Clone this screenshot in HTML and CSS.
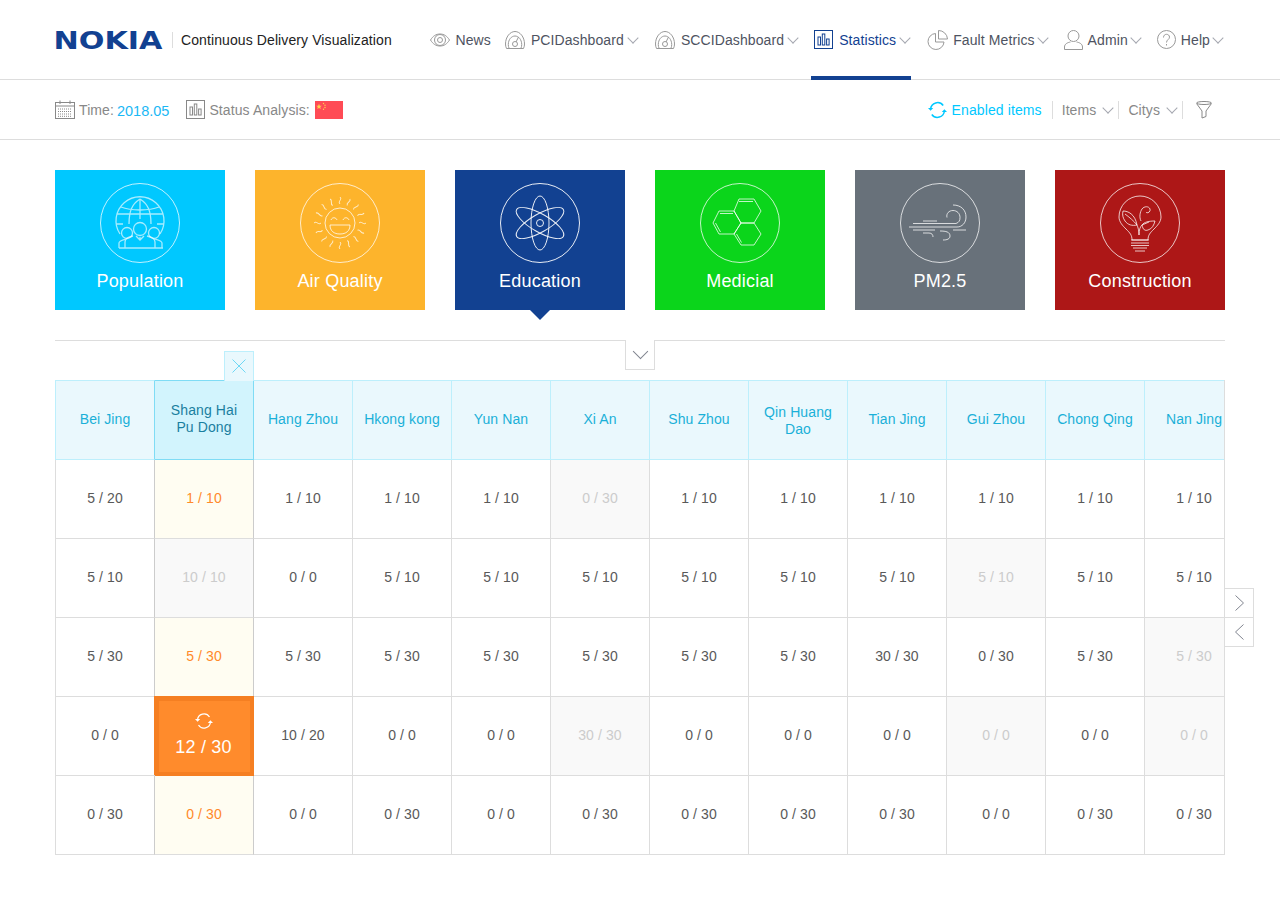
FILE: index.html
```html
<!DOCTYPE html>
<html lang="en">
<head>
  <meta charset="UTF-8">
  <title>Continuous Delivery Visualization</title>
  <link rel="stylesheet" href="styles.css">
</head>
<body>
  <header class="topbar">
    <div class="brand">
      <svg class="logo" width="107" height="30" viewBox="0 0 107 30"><text x="-1.500" y="23.500" textLength="109" lengthAdjust="spacingAndGlyphs">NOKIA</text></svg>
      <span class="brand-name">Continuous Delivery Visualization</span>
    </div>
    <nav class="nav">
      <a class="nav-item">
        <svg class="ico" width="20" height="14" viewBox="0 0 20 14"><path d="M.5 7C3 3 6 1 10 1s7 2 9.500 6C17 11 14 13 10 13S3 11 .5 7z"/><circle cx="10" cy="7" r="5.500"/><circle cx="10" cy="7" r="2.500"/></svg>
        News
      </a>
      <a class="nav-item wide-gap spaced">
        <svg class="ico" width="20" height="18" viewBox="0 0 20 18"><path d="M1.500 17.500C.8 16 .5 14.500.5 13 .5 6 5 .5 10 .5S19.500 6 19.500 13c0 1.500-.3 3-1 4.500z"/><path d="M4 17c-.5-1-.7-2-.7-3.500C3.300 8.500 6.500 5 10 5s6.700 3.500 6.700 8.500c0 1.500-.2 2.500-.7 3.500"/><circle cx="10" cy="13" r="2.500"/><path d="M11 11l2.500-5"/></svg>
        PCIDashboard<i class="chev"></i>
      </a>
      <a class="nav-item wide-gap">
        <svg class="ico" width="20" height="18" viewBox="0 0 20 18"><path d="M1.500 17.500C.8 16 .5 14.500.5 13 .5 6 5 .5 10 .5S19.500 6 19.500 13c0 1.500-.3 3-1 4.500z"/><path d="M4 17c-.5-1-.7-2-.7-3.500C3.300 8.500 6.500 5 10 5s6.700 3.500 6.700 8.500c0 1.500-.2 2.500-.7 3.500"/><circle cx="10" cy="13" r="2.500"/><path d="M11 11l2.500-5"/></svg>
        SCCIDashboard<i class="chev"></i>
      </a>
      <a class="nav-item wide-gap spaced active">
        <svg class="ico" width="19" height="19" viewBox="0 0 19 19"><rect x=".5" y=".5" width="18" height="18"/><rect x="4" y="7" width="2.500" height="8"/><rect x="8.300" y="4" width="2.500" height="11"/><rect x="12.600" y="9" width="2.500" height="6"/></svg>
        Statistics<i class="chev"></i>
      </a>
      <a class="nav-item">
        <svg class="ico" width="21" height="20" viewBox="0 0 21 20"><path d="M8.500 3.500a8 8 0 1 0 8.500 8.500H8.500z"/><path d="M11.500.5v8.500H20.500A9 9 0 0 0 11.500.5z"/></svg>
        Fault Metrics<i class="chev"></i>
      </a>
      <a class="nav-item">
        <svg class="ico" width="19" height="20" viewBox="0 0 19 20"><circle cx="9.500" cy="6" r="5.500"/><path d="M.5 19.500v-2.500c0-3 3-4.500 6-5M18.500 19.500v-2.500c0-3-3-4.500-6-5M.5 19.500h18"/></svg>
        Admin<i class="chev"></i>
      </a>
      <a class="nav-item">
        <svg class="ico" width="19" height="19" viewBox="0 0 19 19"><circle cx="9.500" cy="9.500" r="9"/><path d="M6.500 7.500c0-2 1.300-3.200 3-3.200s3 1.200 3 2.800c0 2.400-3 2.600-3 5.400"/><path d="M9.500 14v1.500"/></svg>
        Help<i class="chev"></i>
      </a>
    </nav>
  </header>

  <section class="subbar">
    <div class="sub-left">
      <svg class="ico grey" width="20" height="19" viewBox="0 0 20 19"><rect x=".5" y="2.500" width="19" height="16"/><path d="M.5 6h19M5 .5v3.500M15 .5v3.500"/><path class="dots" d="M3 9h14M3 11.500h14M3 14h14M3 16.300h14"/></svg>
      <span class="sub-label">Time:</span>
      <span class="sub-value">2018.05</span>
      <svg class="ico grey status-ico" width="19" height="19" viewBox="0 0 19 19"><rect x=".5" y=".5" width="18" height="18"/><rect x="4" y="7" width="2.500" height="8"/><rect x="8.300" y="4" width="2.500" height="11"/><rect x="12.600" y="9" width="2.500" height="6"/></svg>
      <span class="sub-label">Status Analysis:</span>
      <svg class="flag" width="28" height="18" viewBox="0 0 28 18"><rect width="28" height="18" fill="#ff4b55"/><path fill="#ffd34d" d="M4 2.800l.8 1.900 2 .1-1.600 1.300.6 2L4 7l-1.800 1.100.6-2L1.200 4.800l2-.1z"/><circle cx="8.500" cy="2.500" r=".7" fill="#ffd34d"/><circle cx="10" cy="4.300" r=".7" fill="#ffd34d"/><circle cx="10" cy="6.500" r=".7" fill="#ffd34d"/><circle cx="8.500" cy="8.300" r=".7" fill="#ffd34d"/></svg>
    </div>
    <div class="sub-right">
      <a class="enabled">
        <svg class="ico blue" width="19" height="18" viewBox="0 0 19 18"><path d="M2.600 8A7 7 0 0 1 15.200 4.500M16.400 10A7 7 0 0 1 3.800 13.500"/><path class="fill" d="M0 7l2.600 2.800L5.200 7zM13.800 11l2.600-2.800L19 11z"/></svg>
        Enabled items
      </a>
      <a class="filter-item">Items<i class="chev"></i></a>
      <a class="filter-item">Citys<i class="chev"></i></a>
      <a class="filter-item funnel">
        <svg class="ico grey" width="16" height="18" viewBox="0 0 16 18"><ellipse cx="8" cy="2" rx="7.500" ry="1.500"/><path d="M.5 2.500L6 10v7l4-1.500V10l5.500-7.500"/></svg>
      </a>
    </div>
  </section>

  <section class="tiles">
    <div class="tile population">
      <svg class="tile-ico" width="80" height="80" viewBox="0 0 80 80">
        <circle class="ring" cx="40" cy="40" r="39.500"/>
        <g class="heavy">
          <path d="M20 51a24 24 0 1 1 40 0M40 16v20M17 31h46M16 41h7M57 41h7M21 24c10 4 28 4 38 0M40 16c-8 5-11 12-11 25M40 16c8 5 11 12 11 25"/>
          <circle cx="27" cy="50" r="5.500"/><circle cx="54" cy="50" r="5.500"/><circle cx="40" cy="46" r="6.500"/>
          <path d="M19 65v-5c0-2 4-3 7-4M62 65v-5c0-2-4-3-7-4M47 53c4 1 8 2 8 6v6M33 53c-4 1-8 2-8 6v6M19 65h44M40 54v3M36 53l4 4 4-4"/>
        </g>
      </svg>
      <span class="tile-name">Population</span>
    </div>
    <div class="tile air">
      <svg class="tile-ico" width="80" height="80" viewBox="0 0 80 80">
        <circle class="ring" cx="40" cy="40" r="39.500"/>
        <circle cx="40" cy="40" r="15"/>
        <path d="M31 37c1-3 5-3 6 0M43 37c1-3 5-3 6 0M30 42h20c0 6-4 9-10 9s-10-3-10-9z"/>
        <g class="rays">
          <path d="M40 21c-2.500-2.500 2.500-4.500 0-7"/>
          <path transform="rotate(22.500 40 40)" d="M40 21c-2.500-2.500 2.500-4.500 0-7"/>
          <path transform="rotate(45 40 40)" d="M40 21c-2.500-2.500 2.500-4.500 0-7"/>
          <path transform="rotate(67.500 40 40)" d="M40 21c-2.500-2.500 2.500-4.500 0-7"/>
          <path transform="rotate(90 40 40)" d="M40 21c-2.500-2.500 2.500-4.500 0-7"/>
          <path transform="rotate(112.500 40 40)" d="M40 21c-2.500-2.500 2.500-4.500 0-7"/>
          <path transform="rotate(135 40 40)" d="M40 21c-2.500-2.500 2.500-4.500 0-7"/>
          <path transform="rotate(157.500 40 40)" d="M40 21c-2.500-2.500 2.500-4.500 0-7"/>
          <path transform="rotate(180 40 40)" d="M40 21c-2.500-2.500 2.500-4.500 0-7"/>
          <path transform="rotate(202.500 40 40)" d="M40 21c-2.500-2.500 2.500-4.500 0-7"/>
          <path transform="rotate(225 40 40)" d="M40 21c-2.500-2.500 2.500-4.500 0-7"/>
          <path transform="rotate(247.500 40 40)" d="M40 21c-2.500-2.500 2.500-4.500 0-7"/>
          <path transform="rotate(270 40 40)" d="M40 21c-2.500-2.500 2.500-4.500 0-7"/>
          <path transform="rotate(292.500 40 40)" d="M40 21c-2.500-2.500 2.500-4.500 0-7"/>
          <path transform="rotate(315 40 40)" d="M40 21c-2.500-2.500 2.500-4.500 0-7"/>
          <path transform="rotate(337.500 40 40)" d="M40 21c-2.500-2.500 2.500-4.500 0-7"/>
        </g>
      </svg>
      <span class="tile-name">Air Quality</span>
    </div>
    <div class="tile education selected">
      <svg class="tile-ico bright" width="80" height="80" viewBox="0 0 80 80">
        <circle class="ring" cx="40" cy="40" r="39.500"/>
        <ellipse cx="40" cy="40" rx="9" ry="27"/>
        <ellipse cx="40" cy="40" rx="9" ry="27" transform="rotate(60 40 40)"/>
        <ellipse cx="40" cy="40" rx="9" ry="27" transform="rotate(-60 40 40)"/>
        <circle cx="40" cy="40" r="3.500"/>
      </svg>
      <span class="tile-name">Education</span>
    </div>
    <div class="tile medical">
      <svg class="tile-ico" width="80" height="80" viewBox="0 0 80 80">
        <circle class="ring" cx="40" cy="40" r="39.500"/>
        <path d="M39 16h15l7 12-7 12H41l-7-12zM19 28h15l7 12-7 11H19l-6-11zM41 40h13l7 11-7 11H41l-7-11z"/>
        <path d="M39 18.500h14M20 30.500h13M15.500 40l5 9M41.500 59.500l-5-8.500"/>
      </svg>
      <span class="tile-name">Medicial</span>
    </div>
    <div class="tile pm">
      <svg class="tile-ico" width="80" height="80" viewBox="0 0 80 80">
        <circle class="ring" cx="40" cy="40" r="39.500"/>
        <path d="M23 38h14M13 40.500h43c3-1 4-3 4-6 0-4-3-7-7-7s-7 3-6 7M9 44h48c5 0 9-4 9-10 0-7-5-12-13-12M13 47h22M53 47h13M23 50h6c3 0 4 2 4 4M40 48c6 0 10 1 10 5 0 3-3 4-7 4"/>
      </svg>
      <span class="tile-name">PM2.5</span>
    </div>
    <div class="tile construction">
      <svg class="tile-ico" width="80" height="80" viewBox="0 0 80 80">
        <circle class="ring" cx="40" cy="40" r="39.500"/>
        <path d="M32 57c0-5-2-7-6-11-3-3-7-7-7-12a21 21 0 0 1 42 0c0 5-4 9-7 12-4 4-6 6-6 11z"/>
        <path d="M31 57h18M31 60h18M31 62.500h18M33 65h14M35 68h10"/>
        <path d="M23 28c5 0 12 3 14 14-5 1-9 0-12-4-2-3-3-6-2-10zM25 31c4 3 9 7 12 11M39 52c0-5 1-8 3-10l7-3M42 42c2-3 7-4 13-4-1 4-3 8-7 9-3 1-5 0-6-5zM39 52c0-4-1-8-2-10M41 38c-2-4-1-9 1-12 2-3 7-3 8 0 1 3-3 5-4 3"/>
      </svg>
      <span class="tile-name">Construction</span>
    </div>
  </section>

  <div class="divider">
    <a class="collapse"><i class="chev big"></i></a>
  </div>

  <section class="board">
    <a class="close-tab">
      <svg width="14" height="14" viewBox="0 0 14 14"><path d="M.5.5l13 13M13.500.5l-13 13"/></svg>
    </a>
    <div class="table-clip">
      <table class="grid">
        <thead>
          <tr>
            <th>Bei Jing</th>
            <th class="sel-head">Shang Hai<br>Pu Dong</th>
            <th>Hang Zhou</th>
            <th>Hkong kong</th>
            <th>Yun Nan</th>
            <th>Xi An</th>
            <th>Shu Zhou</th>
            <th class="low">Qin Huang<br>Dao</th>
            <th>Tian Jing</th>
            <th>Gui Zhou</th>
            <th>Chong Qing</th>
            <th>Nan Jing</th>
          </tr>
        </thead>
        <tbody>
          <tr>
            <td>5 / 20</td><td class="sel warn">1 / 10</td><td>1 / 10</td><td>1 / 10</td><td>1 / 10</td><td class="off">0 / 30</td><td>1 / 10</td><td>1 / 10</td><td>1 / 10</td><td>1 / 10</td><td>1 / 10</td><td>1 / 10</td>
          </tr>
          <tr>
            <td>5 / 10</td><td class="sel off">10 / 10</td><td>0 / 0</td><td>5 / 10</td><td>5 / 10</td><td>5 / 10</td><td>5 / 10</td><td>5 / 10</td><td>5 / 10</td><td class="off">5 / 10</td><td>5 / 10</td><td>5 / 10</td>
          </tr>
          <tr>
            <td>5 / 30</td><td class="sel warn">5 / 30</td><td>5 / 30</td><td>5 / 30</td><td>5 / 30</td><td>5 / 30</td><td>5 / 30</td><td>5 / 30</td><td>30 / 30</td><td>0 / 30</td><td>5 / 30</td><td class="off">5 / 30</td>
          </tr>
          <tr>
            <td>0 / 0</td>
            <td class="current">
              <svg class="cur-ico" width="20" height="18" viewBox="0 0 20 18"><path d="M3.500 8A6.500 6.500 0 0 1 15.500 5M16.500 10A6.500 6.500 0 0 1 4.500 13"/><path class="fill" d="M1 7l2.600 2.800L6.200 7zM13.800 11l2.600-2.800L19 11z"/></svg>
              12 / 30
            </td>
            <td>10 / 20</td><td>0 / 0</td><td>0 / 0</td><td class="off">30 / 30</td><td>0 / 0</td><td>0 / 0</td><td>0 / 0</td><td class="off">0 / 0</td><td>0 / 0</td><td class="off">0 / 0</td>
          </tr>
          <tr>
            <td>0 / 30</td><td class="sel warn">0 / 30</td><td>0 / 0</td><td>0 / 30</td><td>0 / 0</td><td>0 / 30</td><td>0 / 30</td><td>0 / 30</td><td>0 / 30</td><td>0 / 0</td><td>0 / 30</td><td>0 / 30</td>
          </tr>
        </tbody>
      </table>
    </div>
    <div class="pager">
      <a class="page-btn"><svg width="9" height="16" viewBox="0 0 9 16"><path d="M.5.5L8.500 8 .5 15.500"/></svg></a>
      <a class="page-btn"><svg width="9" height="16" viewBox="0 0 9 16"><path d="M8.500.5L.5 8l8 7.500"/></svg></a>
    </div>
  </section>
</body>
</html>
```
FILE: styles.css
```css
* {
  box-sizing: border-box;
}

body {
  margin: 0;
  background-color: #fff;
  font-family: "Liberation Sans", Arial, sans-serif;
  font-size: 14px;
  letter-spacing: .1px;
  color: #595959;
}

svg {
  display: block;
  flex: none;
}

.topbar {
  display: flex;
  align-items: center;
  justify-content: space-between;
  height: 80px;
  padding: 0 55px;
  border-bottom: 1px solid #ddd;
}

.brand {
  display: flex;
  align-items: center;
}

.logo {
  overflow: visible;
}

.logo text {
  font-family: "DejaVu Sans", sans-serif;
  font-size: 25px;
  font-weight: 700;
  letter-spacing: 0;
  fill: #124191;
}

.brand-name {
  margin-left: 10px;
  padding-left: 8px;
  border-left: 1px solid #ddd;
  line-height: 16px;
  color: #222;
}

.nav {
  display: flex;
  align-items: center;
  height: 79px;
  gap: 14px;
}

.nav-item {
  position: relative;
  display: flex;
  align-items: center;
  gap: 5px;
  height: 100%;
  color: #4e5361;
}

.nav-item.wide-gap {
  gap: 6px;
}

.nav-item.spaced {
  margin-right: 1px;
}

.nav-item.active {
  color: #124191;
}

.nav-item.active::after {
  content: "";
  position: absolute;
  left: -3px;
  right: 1px;
  bottom: -1px;
  height: 4px;
  background-color: #124191;
}

.ico {
  fill: none;
  stroke: #999;
  stroke-width: 1;
}

.active .ico {
  stroke: #124191;
}

.ico.grey {
  stroke: #888;
}

.ico.blue {
  stroke: #00c8ff;
  stroke-width: 1.500;
}

.ico .dots {
  stroke-dasharray: 1 1;
}

.ico .fill {
  fill: #00c8ff;
  stroke: none;
}

.chev {
  display: block;
  flex: none;
  width: 8px;
  height: 8px;
  margin: -4px 3px 0 -1px;
  border-right: 1px solid #a5a8b0;
  border-bottom: 1px solid #a5a8b0;
  transform: rotate(45deg);
}

.chev.big {
  width: 11px;
  height: 11px;
  margin: 0;
  border-color: #80848f;
}

.subbar {
  display: flex;
  align-items: center;
  justify-content: space-between;
  height: 60px;
  padding: 0 55px;
  border-bottom: 1px solid #ddd;
}

.sub-left,
.sub-right {
  display: flex;
  align-items: center;
}

.sub-label {
  margin-left: 4px;
  color: #888;
}

.sub-value {
  margin-left: 3px;
  padding-top: 2px;
  font-size: 14.500px;
  letter-spacing: 0;
  color: #1bb8f5;
}

.status-ico {
  margin-left: 17px;
}

.flag {
  margin-left: 5px;
}

.enabled {
  display: flex;
  align-items: center;
  gap: 5px;
  height: 18px;
  padding-right: 10px;
  color: #00c8ff;
}

.filter-item {
  display: flex;
  align-items: center;
  gap: 9px;
  height: 18px;
  padding: 0 3px 0 9px;
  border-left: 1px solid #ddd;
  color: #888;
}

.funnel {
  padding: 0 13px;
}

.tiles {
  display: flex;
  justify-content: space-between;
  margin: 30px 55px 0;
}

.tile {
  position: relative;
  display: flex;
  flex-direction: column;
  align-items: center;
  width: 170px;
  height: 140px;
  padding-top: 13px;
  color: #fff;
}

.tile-ico {
  fill: none;
  stroke: #fff;
  stroke-width: 1;
  stroke-opacity: .75;
}

.tile-ico.bright {
  stroke-opacity: .9;
}

.tile-ico .heavy {
  stroke-width: 1.300;
  stroke-opacity: .65;
}

.tile-name {
  margin-top: 7px;
  font-size: 18px;
  line-height: 22px;
  letter-spacing: .2px;
}

.population { background-color: #00c8ff; }
.air { background-color: #fdb42c; }
.education { background-color: #124191; }
.medical { background-color: #0bd51b; }
.pm { background-color: #68717a; }
.construction { background-color: #ad1717; }

.selected::after {
  content: "";
  position: absolute;
  left: 75px;
  top: 140px;
  border-left: 10px solid transparent;
  border-right: 10px solid transparent;
  border-top: 10px solid #124191;
}

.divider {
  position: relative;
  height: 40px;
  margin: 30px 55px 0;
  border-top: 1px solid #ddd;
}

.collapse {
  position: absolute;
  left: 570px;
  top: -1px;
  display: flex;
  align-items: center;
  justify-content: center;
  width: 30px;
  height: 30px;
  padding-bottom: 6px;
  background-color: #fff;
  border: 1px solid #ddd;
  border-top: 0;
}

.board {
  position: relative;
  width: 1170px;
  margin: 0 55px;
}

.close-tab {
  position: absolute;
  left: 169px;
  top: -29px;
  display: flex;
  align-items: center;
  justify-content: center;
  width: 30px;
  height: 30px;
  padding-bottom: 2px;
  background-color: #e9f8fd;
  border: 1px solid #bdeffc;
  border-bottom: 0;
}

.close-tab svg {
  fill: none;
  stroke: #6fd8f5;
}

.table-clip {
  overflow: hidden;
  border-right: 1px solid #ddd;
}

.grid {
  table-layout: fixed;
  width: 1189px;
  border-collapse: separate;
  border-spacing: 0;
}

.grid th,
.grid td {
  width: 99px;
  padding: 0 5px 2px;
  text-align: center;
  border-right: 1px solid #ddd;
  border-bottom: 1px solid #ddd;
}

.grid th:first-child,
.grid td:first-child {
  width: 100px;
  border-left: 1px solid #ddd;
}

.grid th {
  height: 80px;
  font-weight: 400;
  line-height: 17px;
  color: #1ab0d8;
  background-color: #eaf8fd;
  border-top: 1px solid #bdeffc;
  border-right-color: #bdeffc;
  border-bottom-color: #bdeffc;
}

.grid th.low {
  padding: 2px 5px 0;
}

.grid th:first-child {
  border-left-color: #bdeffc;
}

.grid th:nth-child(1) {
  border-right-color: #7fdcf5;
}

.grid th.sel-head {
  color: #1a7fa0;
  background-color: #d2f4fd;
  border-color: #7fdcf5;
}

.grid td {
  height: 79px;
}

.grid td:nth-child(1) {
  border-right-color: #ccc;
}

.grid td.sel {
  border-right-color: #ccc;
}

.grid td.warn {
  color: #ff8a2b;
  background-color: #fffdf2;
}

.grid td.off {
  color: #ccc;
  background-color: #f9f9f9;
}

.grid td.current {
  padding: 0 6px 3px 4px;
  font-size: 18px;
  line-height: 22px;
  letter-spacing: .2px;
  color: #fff;
  background-color: #ff8b2c;
  box-shadow: inset 0 0 0 4px #f57f22, -1px -1px 0 #f57f22, 0 -1px 0 #f57f22;
  border-right: 0;
  border-bottom: 0;
}

.cur-ico {
  margin: 0 auto 6px;
  fill: none;
  stroke: #fff;
  stroke-width: 1.200;
}

.cur-ico .fill {
  fill: #fff;
  stroke: none;
}

.pager {
  position: absolute;
  left: 1169px;
  top: 208px;
  width: 30px;
}

.page-btn {
  display: flex;
  align-items: center;
  justify-content: center;
  height: 30px;
  margin-bottom: -1px;
  background-color: #fff;
  border: 1px solid #ddd;
}

.page-btn svg {
  fill: none;
  stroke: #80848f;
}
```
